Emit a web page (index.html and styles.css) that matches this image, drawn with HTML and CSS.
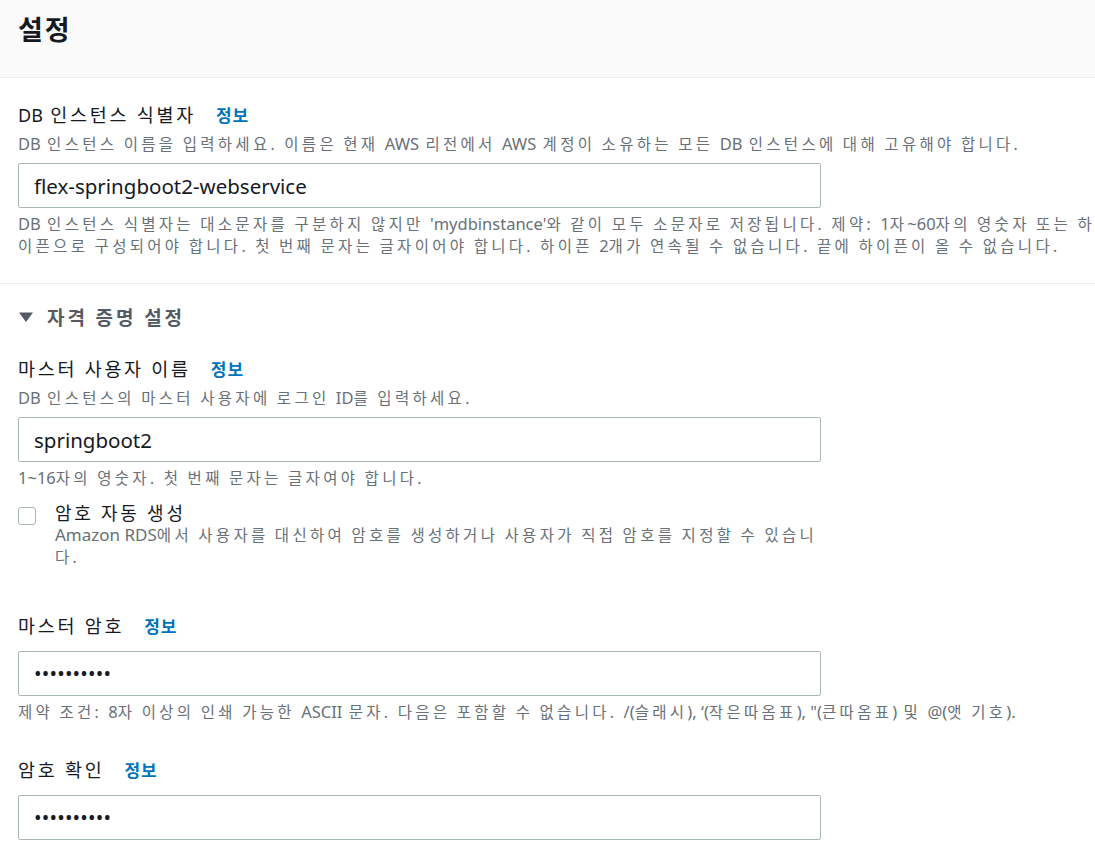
FILE: index.html
```html
<!DOCTYPE html>
<html lang="ko">
<head>
<meta charset="utf-8">
<title>설정</title>
<link rel="stylesheet" href="styles.css">
</head>
<body>
<div class="panel">
  <header class="panel-header">
    <h2 class="panel-title">설정</h2>
  </header>

  <section class="group">
    <div class="field field-first">
      <div class="label"><span class="en">DB</span> 인스턴스 식별자<a class="info" href="#">정보</a></div>
      <div class="desc"><span class="en">DB</span> 인스턴스 이름을 입력하세요. 이름은 현재 <span class="en">AWS</span> 리전에서 <span class="en">AWS</span> 계정이 소유하는 모든 <span class="en">DB</span> 인스턴스에 대해 고유해야 합니다.</div>
      <input class="input" type="text" value="flex-springboot2-webservice">
      <div class="constraint"><span class="en">DB</span> 인스턴스 식별자는 대소문자를 구분하지 않지만 <span class="en">'mydbinstance'</span>와 같이 모두 소문자로 저장됩니다. 제약: <span class="en">1</span>자<span class="en">~60</span>자의 영숫자 또는 하<br>이픈으로 구성되어야 합니다. 첫 번째 문자는 글자이어야 합니다. 하이픈 <span class="en">2</span>개가 연속될 수 없습니다. 끝에 하이픈이 올 수 없습니다.</div>
    </div>
  </section>

  <section class="group group-credentials">
    <div class="expander">
      <svg class="caret" width="16" height="12" viewBox="0 0 16 12"><path d="M1 1.5 L15 1.5 L8 11 Z" fill="#545b64"/></svg>
      <span>자격 증명 설정</span>
    </div>

    <div class="field field-user">
      <div class="label">마스터 사용자 이름<a class="info" href="#">정보</a></div>
      <div class="desc"><span class="en">DB</span> 인스턴스의 마스터 사용자에 로그인 <span class="en">ID</span>를 입력하세요.</div>
      <input class="input" type="text" value="springboot2">
      <div class="constraint"><span class="en">1~16</span>자의 영숫자. 첫 번째 문자는 글자여야 합니다.</div>
    </div>

    <label class="checkbox-row">
      <span class="checkbox"></span>
      <span class="checkbox-text">
        <span class="checkbox-label">암호 자동 생성</span>
        <span class="checkbox-desc"><span class="en">Amazon RDS</span>에서 사용자를 대신하여 암호를 생성하거나 사용자가 직접 암호를 지정할 수 있습니<br>다.</span>
      </span>
    </label>

    <div class="field field-pass">
      <div class="label">마스터 암호<a class="info" href="#">정보</a></div>
      <input class="input input-nodesc input-password" type="password" value="abcdefghij">
      <div class="constraint">제약 조건: <span class="en">8</span>자 이상의 인쇄 가능한 <span class="en">ASCII</span> 문자. 다음은 포함할 수 없습니다. <span class="en">/(</span>슬래시<span class="en">), ‘(</span>작은따옴표<span class="en">), "(</span>큰따옴표<span class="en">)</span> 및 <span class="en">@(</span>앳 기호<span class="en">).</span></div>
    </div>

    <div class="field field-confirm">
      <div class="label">암호 확인<a class="info" href="#">정보</a></div>
      <input class="input input-nodesc input-password" type="password" value="abcdefghij">
    </div>
  </section>
</div>
</body>
</html>
```

FILE: styles.css
```css
* { box-sizing: border-box; }

html, body {
  margin: 0;
  padding: 0;
  background: #ffffff;
}

body {
  font-family: "Noto Sans", "Noto Sans CJK KR", sans-serif;
  color: #16191f;
  overflow: hidden;
}

.panel {
  width: 1095px;
  overflow: hidden;
}

.panel-header {
  height: 78px;
  background: #fafafa;
  border-bottom: 1px solid #eaeded;
  padding: 15px 18px 0;
}

.panel-title {
  margin: 0;
  font-size: 27px;
  line-height: 30px;
  font-weight: 700;
  letter-spacing: 2px;
  color: #16191f;
}

.group {
  padding-left: 18px;
}

.group-credentials {
  border-top: 1px solid #eaeded;
  margin-top: 26px;
}

.field {
  display: flex;
  flex-direction: column;
  align-items: flex-start;
}

.field-first { padding-top: 24px; }

.en {
  letter-spacing: 0;
  word-spacing: 0;
}

.label {
  font-size: 18.5px;
  line-height: 26px;
  letter-spacing: 2.7px;
  color: #16191f;
  white-space: nowrap;
}

.label .en { font-size: 18px; }

.info {
  margin-left: 20px;
  font-size: 17px;
  font-weight: 700;
  letter-spacing: 1px;
  color: #0073bb;
  text-decoration: none;
}

.desc,
.constraint,
.checkbox-desc {
  font-size: 15.5px;
  line-height: 22px;
  letter-spacing: 3.3px;
  word-spacing: -1px;
  color: #687078;
  white-space: nowrap;
}

.desc .en,
.constraint .en,
.checkbox-desc .en {
  font-size: 16.5px;
}

.desc { margin-top: 4px; }

.constraint { margin-top: 5px; }

.input {
  margin-top: 8px;
  width: 803px;
  height: 45px;
  border: 1px solid #aab7b8;
  border-radius: 2px;
  padding: 0 15px;
  font-family: "Noto Sans", "Noto Sans CJK KR", sans-serif;
  font-size: 20.5px;
  color: #16191f;
  background: #ffffff;
  outline: none;
}

.input-nodesc { margin-top: 11px; }

.input-password {
  font-size: 20px;
  letter-spacing: 0.2px;
}

.expander {
  display: flex;
  align-items: center;
  gap: 13px;
  margin-top: 20px;
  height: 26px;
  font-size: 19px;
  font-weight: 700;
  letter-spacing: 2.9px;
  color: #545b64;
}

.caret { display: block; }

.field-user { margin-top: 26px; }

.checkbox-row {
  display: flex;
  align-items: flex-start;
  gap: 19px;
  margin-top: 13px;
}

.checkbox {
  flex: none;
  width: 18px;
  height: 18px;
  margin-top: 5px;
  border: 1px solid #aab7b8;
  border-radius: 3px;
  background: #ffffff;
}

.checkbox-text {
  display: flex;
  flex-direction: column;
}

.checkbox-label {
  font-size: 18px;
  line-height: 22px;
  letter-spacing: 2.75px;
  color: #16191f;
}

.checkbox-desc .en { font-size: 17px; }

.field-pass { margin-top: 45px; }

.field-confirm { margin-top: 34px; }
```
